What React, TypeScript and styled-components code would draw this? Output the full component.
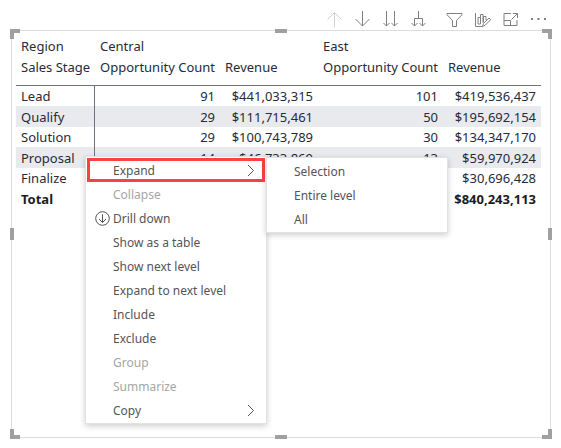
import React from "react";
import styled, { createGlobalStyle, css } from "styled-components";

const GlobalStyle = createGlobalStyle`
  * { box-sizing: border-box; }
  body { margin: 0; background: #fff; font-family: "Noto Sans", "Segoe UI", sans-serif; }
`;

const Page = styled.main`
  display: flex;
  flex-direction: column;
  min-height: 100vh;
  padding: 8px 10px 10px 11px;
`;

const Toolbar = styled.div`
  display: flex;
  justify-content: flex-end;
  gap: 8px;
  height: 22px;
  margin-right: -1px;
`;

const ToolGroup = styled.div`
  display: flex;
`;

const ToolButton = styled.button`
  display: flex;
  align-items: center;
  justify-content: center;
  width: 28px;
  height: 22px;
  padding: 0;
  border: 0;
  background: transparent;
  color: #808080;

  &:disabled { color: #cfcfcf; }
`;

const Icon = styled.svg`
  display: block;
  flex: none;
  fill: none;
  stroke: currentColor;
`;

const Visual = styled.section`
  position: relative;
  flex: 1;
  padding: 5px 10px 16px 4px;
  border: 1px solid #dcdcdc;
`;

type Spot = "tl" | "t" | "tr" | "l" | "r" | "bl" | "b" | "br";

const spots: Record<Spot, ReturnType<typeof css>> = {
  tl: css`top: -2px; left: -2px; width: 10px; height: 10px; border-width: 4px 0 0 4px;`,
  tr: css`top: -2px; right: -2px; width: 10px; height: 10px; border-width: 4px 4px 0 0;`,
  bl: css`bottom: -2px; left: -2px; width: 10px; height: 10px; border-width: 0 0 4px 4px;`,
  br: css`bottom: -2px; right: -2px; width: 10px; height: 10px; border-width: 0 4px 4px 0;`,
  t: css`top: -2px; left: calc(50% - 6px); width: 12px; border-width: 4px 0 0;`,
  b: css`bottom: -2px; left: calc(50% - 6px); width: 12px; border-width: 4px 0 0;`,
  l: css`left: -2px; top: calc(50% - 6px); height: 12px; border-width: 0 0 0 4px;`,
  r: css`right: -2px; top: calc(50% - 6px); height: 12px; border-width: 0 0 0 4px;`,
};

const Handle = styled.span<{ $spot: Spot }>`
  position: absolute;
  border: 0 solid #a0a0a0;
  ${(p) => spots[p.$spot]}
`;

const Matrix = styled.table`
  width: 100%;
  table-layout: fixed;
  border-collapse: separate;
  border-spacing: 0;
  color: #252b3a;
  font-size: 13px;
  line-height: 20px;
  white-space: nowrap;
`;

const Col = styled.col<{ $width: number }>`
  width: ${(p) => p.$width}px;
`;

const HeadCell = styled.th<{ $last?: boolean }>`
  height: ${(p) => (p.$last ? 29 : 21)}px;
  padding: 0 0 0 5px;
  border-bottom: ${(p) => (p.$last ? "1px solid #6e7383" : "0")};
  font-weight: 400;
  text-align: left;
  vertical-align: top;
`;

const BodyRow = styled.tr<{ $total?: boolean }>`
  height: 20px;
  &:nth-child(even) { height: 21px; }
  &:nth-child(even) > * { background: ${(p) => (p.$total ? "transparent" : "#e9eaed")}; }
  > * { font-weight: ${(p) => (p.$total ? 700 : 400)}; }
  > th { border-right: ${(p) => (p.$total ? "0" : "1px solid #6e7383")}; }
  color: ${(p) => (p.$total ? "#1c1c1c" : "inherit")};
`;

const RowHead = styled.th`
  padding: 0 0 0 5px;
  text-align: left;
`;

const ValueCell = styled.td`
  padding: 0 5px 0 0;
  text-align: right;
`;

const Menu = styled.ul<{ $sub?: boolean }>`
  position: absolute;
  top: ${(p) => (p.$sub ? 126 : 125)}px;
  left: ${(p) => (p.$sub ? 254 : 73)}px;
  width: 182px;
  margin: 0;
  padding: 1px;
  border: 1px solid #e2e2e2;
  background: #fff;
  box-shadow: 0 2px 6px rgba(0, 0, 0, 0.2);
  list-style: none;
`;

const MenuItem = styled.button<{ $marked?: boolean }>`
  display: flex;
  align-items: center;
  width: 100%;
  height: 24px;
  padding: 0 10px 0 8px;
  border: 0;
  outline: ${(p) => (p.$marked ? "3px solid #fb4141" : "0")};
  outline-offset: -3px;
  background: transparent;
  color: #555;
  font-family: inherit;
  font-size: 12px;
  line-height: 16px;
  text-align: left;

  &:disabled { color: #a6a6a6; }
`;

const IconSlot = styled.span`
  flex: none;
  width: 18px;
`;

const Label = styled.span`
  flex: 1;
  padding-top: 1px;
  white-space: nowrap;
`;

const Chevron = () => (
  <Icon width="8" height="13" viewBox="0 0 8 13" aria-hidden="true">
    <path d="M1 1l5.5 5.5L1 12" />
  </Icon>
);

const DrillIcon = () => (
  <Icon width="15" height="15" viewBox="0 0 15 15" aria-hidden="true">
    <circle cx="7.5" cy="7.5" r="6.8" />
    <path d="M7.5 3.2v8.2M4 8l3.5 3.5L11 8" />
  </Icon>
);

type Tool = { name: string; paths: string; disabled?: boolean; dots?: boolean };

const toolGroups: Tool[][] = [
  [
    { name: "Drill up", disabled: true, paths: "M8.5 16V1.5M1.5 8.5l7-7 7 7" },
    { name: "Drill down", paths: "M8.5 0v15M1.5 8l7 7 7-7" },
    { name: "Go to the next level", paths: "M4.5 0v15M1.5 12l3 3 3-3M12.5 0v15M9.5 12l3 3 3-3" },
    { name: "Expand to next level", paths: "M8.5 0v7M4.5 15V7.5h8V15M1.5 12l3 3 3-3M9.5 12l3 3 3-3" },
  ],
  [
    { name: "Filters", paths: "M1 2.5h15v1.2L10.5 9.5v6h-4v-6L1 3.7z" },
    {
      name: "Personalize",
      paths: "M1.5 2v13.5H8M4 13V6.500h2.500V13zM6.500 13V3.500H9V12M9.500 11V5.500H12V9M8.500 15.500l1-3 5.500-5.500 1.700 1.700-5.500 5.500z",
    },
    {
      name: "Focus mode",
      paths: "M9 2.500H2v12h13V9M2 9.500h6.500v5M9.500 8.500l6-6M11 2.500h4.500V7",
    },
    { name: "More options", dots: true, paths: "" },
  ],
];

const rows: string[][] = [
  ["Lead", "91", "$441,033,315", "101", "$419,536,437"],
  ["Qualify", "29", "$111,715,461", "50", "$195,692,154"],
  ["Solution", "29", "$100,743,789", "30", "$134,347,170"],
  ["Proposal", "14", "$46,733,869", "13", "$59,970,924"],
  ["Finalize", "", "", "", "$30,696,428"],
  ["Total", "", "", "", "$840,243,113"],
];

type Entry = { label: string; disabled?: boolean; more?: boolean; marked?: boolean; drill?: boolean };

const menuEntries: Entry[] = [
  { label: "Expand", more: true, marked: true },
  { label: "Collapse", disabled: true },
  { label: "Drill down", drill: true },
  { label: "Show as a table" },
  { label: "Show next level" },
  { label: "Expand to next level" },
  { label: "Include" },
  { label: "Exclude" },
  { label: "Group", disabled: true },
  { label: "Summarize", disabled: true },
  { label: "Copy", more: true },
];

const subEntries: Entry[] = [{ label: "Selection" }, { label: "Entire level" }, { label: "All" }];

const Entries = ({ items }: { items: Entry[] }) => (
  <>
    {items.map((e) => (
      <li key={e.label}>
        <MenuItem type="button" disabled={e.disabled} $marked={e.marked}>
          <IconSlot>{e.drill && <DrillIcon />}</IconSlot>
          <Label>{e.label}</Label>
          {e.more && <Chevron />}
        </MenuItem>
      </li>
    ))}
  </>
);

const handleSpots: Spot[] = ["tl", "t", "tr", "l", "r", "bl", "b", "br"];

export default function App() {
  return (
    <>
      <GlobalStyle />
      <Page>
        <Toolbar role="toolbar" aria-label="Visual actions">
          {toolGroups.map((group) => (
            <ToolGroup key={group[0].name}>
              {group.map((t) => (
                <ToolButton key={t.name} type="button" aria-label={t.name} disabled={t.disabled}>
                  <Icon width="17" height="17" viewBox="0 0 17 17">
                    {t.dots ? (
                      <path d="M1 8h2M7.500 8h2M14 8h2" strokeWidth="2" />
                    ) : (
                      <path d={t.paths} />
                    )}
                  </Icon>
                </ToolButton>
              ))}
            </ToolGroup>
          ))}
        </Toolbar>
        <Visual>
          <Matrix>
            <colgroup>
              <Col $width={79} />
              <Col $width={125} />
              <Col $width={98} />
              <Col $width={125} />
              <Col $width={98} />
            </colgroup>
            <thead>
              <tr>
                <HeadCell>Region</HeadCell>
                <HeadCell colSpan={2}>Central</HeadCell>
                <HeadCell colSpan={2}>East</HeadCell>
              </tr>
              <tr>
                <HeadCell $last>Sales Stage</HeadCell>
                <HeadCell $last>Opportunity Count</HeadCell>
                <HeadCell $last>Revenue</HeadCell>
                <HeadCell $last>Opportunity Count</HeadCell>
                <HeadCell $last>Revenue</HeadCell>
              </tr>
            </thead>
            <tbody>
              {rows.map(([name, ...values]) => (
                <BodyRow key={name} $total={name === "Total"}>
                  <RowHead scope="row">{name}</RowHead>
                  {values.map((v, i) => (
                    <ValueCell key={i}>{v}</ValueCell>
                  ))}
                </BodyRow>
              ))}
            </tbody>
          </Matrix>
          {handleSpots.map((s) => (
            <Handle key={s} $spot={s} />
          ))}
          <Menu>
            <Entries items={menuEntries} />
          </Menu>
          <Menu $sub>
            <Entries items={subEntries} />
          </Menu>
        </Visual>
      </Page>
    </>
  );
}
